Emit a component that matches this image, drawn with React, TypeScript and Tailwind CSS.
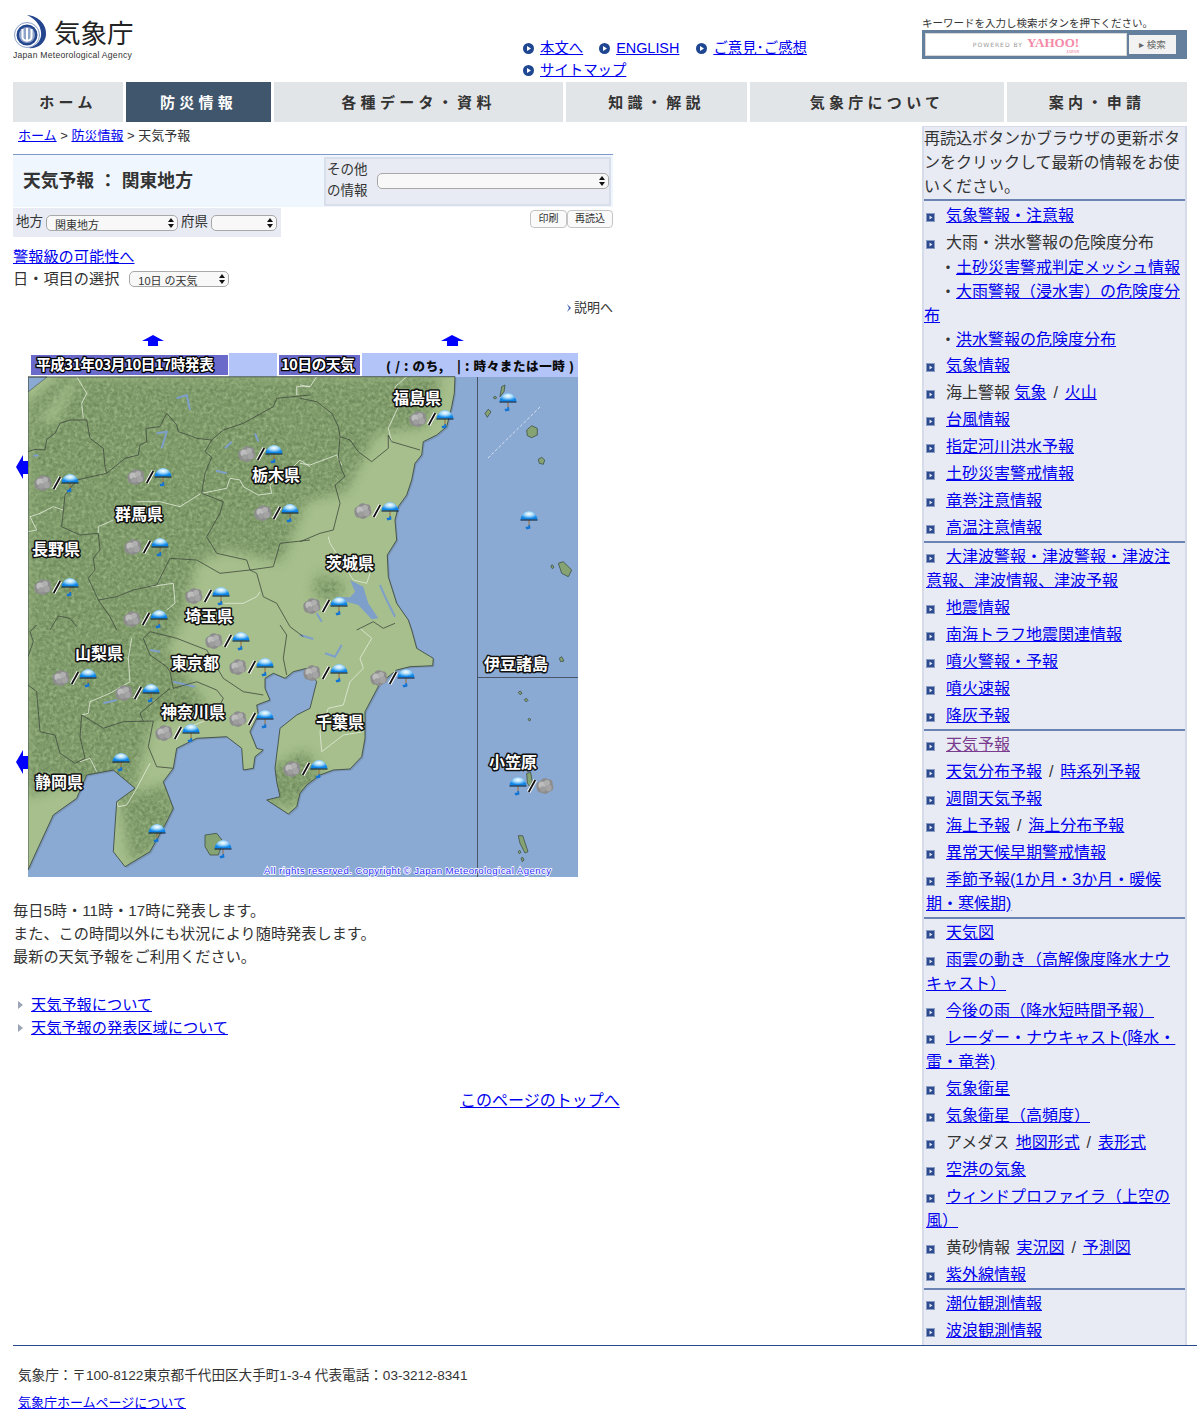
import type { ReactNode } from "react";

type Pt = number[];

// zoom-crop coordinates (3x) to page coordinates
const z = (ox: number, oy: number, pts: Pt[]) => pts.map(([x, y]) => [ox + x / 3, oy + y / 3]);
const z4 = (pts: Pt[]) => z(10, 370, pts);
const z5 = (pts: Pt[]) => z(300, 370, pts);
const z6 = (pts: Pt[]) => z(10, 625, pts);
const z7 = (pts: Pt[]) => z(300, 625, pts);
const toPts = (pts: Pt[]) => pts.map(([x, y]) => `${x.toFixed(1)},${y.toFixed(1)}`).join(" ");

const land = [
  ...z5([[465, 20], [463, 70], [455, 110], [440, 170], [410, 195], [370, 215], [365, 255], [345, 280], [335, 330], [320, 375], [295, 410], [285, 450], [290, 510], [262, 555], [265, 620], [290, 700], [325, 750], [335, 780]]),
  ...z7([[350, 70], [400, 100], [398, 122], [330, 125], [290, 135], [240, 175], [195, 260], [195, 340], [185, 395], [150, 432], [100, 435], [60, 450], [20, 480], [0, 505]]),
  ...z6([[860, 545], [835, 567], [770, 525], [810, 515], [800, 470], [795, 430], [810, 310], [860, 270], [900, 250], [920, 170], [890, 130], [850, 140], [825, 160], [790, 145], [765, 160], [765, 190], [780, 225], [740, 240], [745, 270], [720, 320], [740, 370], [760, 375], [735, 395], [730, 430], [700, 435], [695, 370], [650, 335], [560, 340], [500, 370], [490, 430], [460, 470], [490, 550], [465, 600], [420, 680], [345, 725], [310, 680], [320, 530], [375, 490], [310, 435], [230, 450], [200, 520], [130, 570], [70, 700], [54, 735]]),
  [28, 377],
];

const islands = [
  z5([[600, 80], [605, 50], [615, 45], [612, 65]]),
  z5([[555, 130], [565, 118], [573, 125], [562, 142]]),
  z5([[680, 180], [695, 167], [712, 175], [712, 195], [695, 203], [682, 197]]),
  z5([[715, 268], [725, 262], [734, 270], [730, 283], [718, 280]]),
  z5([[775, 580], [790, 575], [815, 600], [805, 620], [785, 610]]),
  z5([[752, 588], [757, 584], [762, 592], [757, 596]]),
  z5([[580, 82], [586, 79], [590, 84], [584, 87]]),
  z6([[585, 630], [620, 625], [640, 650], [625, 690], [600, 690], [585, 665]]),
  z7([[778, 100], [785, 95], [792, 108], [782, 110]]),
  z7([[655, 202], [661, 198], [666, 205], [660, 209]]),
  z7([[673, 224], [679, 220], [684, 226], [679, 231]]),
  z7([[684, 283], [688, 280], [693, 284], [688, 288]]),
  z7([[680, 445], [692, 442], [697, 470], [690, 485], [682, 475]]),
  z7([[655, 632], [668, 632], [684, 680], [675, 684], [660, 655]]),
  z7([[654, 680], [659, 676], [663, 682], [658, 686]]),
  z7([[663, 700], [668, 697], [672, 705], [667, 710]]),
];

const darkLines = [
  z4([[54, 245], [75, 238], [105, 240], [110, 208], [135, 190], [150, 160], [180, 150], [230, 150], [240, 205], [280, 235], [285, 290], [290, 310], [345, 265], [385, 255], [390, 225], [410, 215], [408, 175], [450, 170], [470, 130], [500, 165], [505, 185], [535, 195], [560, 205], [605, 210], [585, 245], [605, 262], [585, 310], [575, 370], [640, 395], [630, 430], [590, 500], [620, 550], [710, 570], [720, 600], [790, 590], [810, 520], [900, 510]]),
  z4([[290, 310], [200, 330], [165, 375], [155, 470], [210, 495], [265, 490], [270, 540], [250, 565], [255, 600], [235, 625], [265, 690], [300, 740], [320, 780]]),
  z4([[605, 210], [640, 180], [700, 160], [790, 110], [800, 85], [900, 75]]),
  z4([[720, 600], [740, 610], [760, 680], [800, 700], [840, 770], [880, 800]]),
  z4([[265, 690], [320, 680], [370, 660], [440, 645], [480, 565], [560, 570], [630, 610], [720, 600]]),
  z4([[120, 780], [145, 738], [180, 745], [200, 770]]),
  z5([[0, 85], [50, 95], [95, 130], [115, 170], [120, 200], [150, 210], [175, 245], [215, 275], [265, 235], [265, 195], [275, 215], [360, 240]]),
  z5([[120, 200], [115, 260], [125, 300], [135, 320], [105, 345], [120, 400], [100, 480], [60, 490], [0, 515]]),
  z5([[170, 780], [220, 755], [250, 775], [285, 760]]),
  z6([[54, 95], [70, 50], [60, 20], [80, 0]]),
  z6([[400, 40], [420, 20], [500, 40], [590, 75], [640, 160], [700, 200], [760, 210]]),
  z6([[400, 40], [420, 90], [470, 125], [480, 140], [490, 190], [560, 170], [620, 195], [640, 220], [620, 260]]),
  z6([[400, 290], [390, 265], [480, 190]]),
  z6([[240, 285], [280, 310], [340, 290], [430, 288], [415, 365], [440, 425], [490, 430]]),
  z6([[240, 285], [215, 270], [210, 335], [225, 400], [195, 415], [150, 385], [135, 330], [90, 320], [80, 200], [54, 180]]),
  z6([[830, 150], [820, 100], [830, 30], [810, 0]]),
];

const whiteLines = [
  z4([[200, 20], [230, 70], [215, 100], [220, 145]]),
  z4([[60, 440], [90, 430], [130, 410], [160, 420]]),
  z4([[60, 440], [80, 480], [54, 485]]),
  z4([[265, 490], [265, 470], [310, 450]]),
  z4([[380, 395], [450, 395], [510, 410], [570, 372]]),
  z4([[575, 370], [650, 355], [660, 325], [690, 330], [700, 350], [745, 375], [785, 370], [780, 345], [800, 330], [830, 310], [870, 270], [900, 290]]),
  z4([[860, 75], [860, 50], [900, 50]]),
  z4([[420, 650], [490, 640], [495, 700], [470, 720]]),
  z4([[640, 700], [700, 700], [740, 680], [750, 665]]),
  z5([[0, 280], [30, 285], [110, 255], [125, 285]]),
  z5([[50, 20], [30, 50], [0, 45]]),
  z5([[320, 20], [285, 50], [295, 110], [265, 175], [275, 215]]),
  z5([[85, 500], [90, 520], [160, 630], [200, 640], [210, 610]]),
  z6([[240, 230], [300, 205], [360, 170], [355, 100], [365, 40]]),
  z6([[240, 230], [235, 265], [215, 270]]),
  z6([[210, 410], [240, 400], [260, 440]]),
  z6([[420, 415], [380, 490], [350, 540], [325, 545], [320, 530]]),
  z6([[540, 305], [590, 285]]),
  z7([[180, 10], [215, 40], [180, 100], [190, 130], [150, 170], [130, 240], [85, 250], [60, 320], [65, 380], [130, 330], [190, 320]]),
];

const lake = z5([[150, 630], [190, 650], [205, 700], [235, 745], [215, 748], [175, 705], [130, 692], [105, 680], [150, 682], [165, 665]]);
const rivers = [
  z5([[240, 645], [255, 680], [285, 740]]),
  z5([[50, 730], [65, 755]]),
  z4([[500, 85], [530, 75], [540, 120]]),
  z4([[440, 190], [470, 185], [455, 235]]),
  z4([[618, 302], [650, 310]]),
  z4([[735, 190], [745, 215]]),
  z4([[645, 235], [665, 215]]),
  z4([[70, 258], [85, 255]]),
  z7([[75, 85], [105, 95], [125, 60]]),
  z7([[0, 30], [40, 42]]),
  z6([[420, 75], [450, 80]]),
  z6([[490, 170], [555, 185]]),
  z6([[280, 235], [320, 225]]),
];

const mountains = [
  [[28, 405], [62, 377], [440, 377], [425, 425], [375, 432], [345, 490], [305, 500], [280, 560], [225, 548], [195, 562], [180, 620], [165, 650], [205, 705], [150, 722], [130, 800], [70, 780], [28, 795]],
  [[270, 770], [305, 752], [322, 778], [290, 806], [262, 800]],
  [[122, 800], [168, 785], [176, 830], [132, 862]],
  [[318, 575], [345, 585], [335, 600], [315, 595]],
];

const pairs = [
  [43, 483], [136, 477], [247, 454], [263, 513], [133, 547], [43, 587], [194, 596], [132, 619], [418, 419], [363, 511],
  [312, 606], [214, 641], [238, 667], [61, 678], [124, 693], [164, 733], [238, 719], [312, 673], [379, 678], [292, 769],
];
const umbrellas = [[508, 402], [529, 520], [121, 762], [157, 833], [223, 849]];

const labels: [string, number, number][] = [
  ["福島県", 417, 398], ["栃木県", 276, 475], ["群馬県", 139, 514], ["長野県", 56, 549], ["茨城県", 350, 563], ["埼玉県", 209, 616],
  ["山梨県", 99, 653], ["東京都", 195, 663], ["神奈川県", 193, 712], ["千葉県", 340, 722], ["静岡県", 59, 782], ["伊豆諸島", 516, 664], ["小笠原", 513, 762],
];

function Cloud({ x, y }: { x: number; y: number }) {
  return (
    <g transform={`translate(${x} ${y})`}>
      <path d="M-8.5 1 C-9.5 -3 -6 -4.5 -4.5 -5 C-3.5 -8.5 1 -8.5 3 -6.5 C6 -7.5 8.5 -4.5 7.5 -2 C9.5 1 8 5.5 4.5 5.5 C2.5 8.5 -2 8.5 -3.5 6.5 C-6.5 7.5 -8.5 4 -8.5 1 Z" fill="#8d8d8d" />
      <circle cx="-3" cy="-1" r="3.6" fill="#bdbdbd" />
      <circle cx="2" cy="-3" r="3" fill="#b0b0b0" />
      <circle cx="3.5" cy="2" r="3.2" fill="#a4a4a4" />
      <circle cx="-2" cy="3" r="2.8" fill="#9d9d9d" />
    </g>
  );
}

function Umbrella({ x, y }: { x: number; y: number }) {
  return (
    <g transform={`translate(${x} ${y})`}>
      <line x1="0" y1="0" x2="0" y2="6" stroke="#9a6a3a" strokeWidth="1" />
      <path d="M-8.5 -0.5 C-8 -5 -4 -9 0 -9 C4 -9 8 -5 8.5 -0.5 Z" fill="url(#umb)" />
      <line x1="-8.5" y1="0" x2="8.5" y2="0" stroke="#10223a" strokeWidth="1.1" />
      <path d="M1 5 L1.5 8.5 L-2.5 9.5 L-3.5 7 L-0.5 6.5 L-0.5 5 Z" fill="#1173d4" />
    </g>
  );
}

function Slash({ x, y }: { x: number; y: number }) {
  return (
    <g>
      <line x1={x + 3.3} y1={y - 6} x2={x - 3.3} y2={y + 6} stroke="#ffffff" strokeWidth="3.8" />
      <line x1={x + 3.3} y1={y - 6} x2={x - 3.3} y2={y + 6} stroke="#111111" strokeWidth="1.8" />
    </g>
  );
}

function KantoMap() {
  return (
    <svg width="600" height="545" viewBox="13 333 600 545" className="block">
      <defs>
        <clipPath id="landClip"><polygon points={toPts(land)} /></clipPath>
        <radialGradient id="umb" cx="0.5" cy="0.35" r="0.55">
          <stop offset="0" stopColor="#ffffff" />
          <stop offset="0.45" stopColor="#a9dcfb" />
          <stop offset="1" stopColor="#0b84e8" />
        </radialGradient>
        <filter id="blurPatch"><feGaussianBlur stdDeviation="4" /></filter>
        <filter id="terrain" x="-5%" y="-5%" width="110%" height="110%" colorInterpolationFilters="sRGB">
          <feGaussianBlur in="SourceGraphic" stdDeviation="6" result="soft" />
          <feTurbulence type="fractalNoise" baseFrequency="0.28" numOctaves="3" seed="7" result="noise" />
          <feColorMatrix in="noise" type="matrix" values="0 0 0 0 0.42  0 0 0 0 0.52  0 0 0 0 0.35  2 0 0 0 -0.75" result="shade" />
          <feComposite in="shade" in2="soft" operator="in" result="shadeIn" />
          <feColorMatrix in="noise" type="matrix" values="0 0 0 0 0.62  0 0 0 0 0.72  0 0 0 0 0.53  0 2 0 0 -0.85" result="lite" />
          <feComposite in="lite" in2="soft" operator="in" result="liteIn" />
          <feMerge>
            <feMergeNode in="soft" />
            <feMergeNode in="shadeIn" />
            <feMergeNode in="liteIn" />
          </feMerge>
        </filter>
      </defs>

      {/* page arrows */}
      <polygon points="142,341 153,335 164,341 158,341 158,346 148,346 148,341" fill="#0000ff" />
      <polygon points="441,341 452,335 464,341 458,341 458,346 447,346 447,341" fill="#0000ff" />

      {/* header strip */}
      <rect x="30" y="353" width="548" height="24" fill="#b3c5f8" />
      <rect x="30" y="353" width="199" height="24" fill="#ffffff" />
      <rect x="31" y="355" width="197" height="20" fill="#6a6acb" />
      <rect x="277" y="353" width="85" height="24" fill="#ffffff" />
      <rect x="279" y="355" width="81" height="20" fill="#6a6acb" />
      <g fontFamily="'Noto Sans CJK JP', sans-serif" fontWeight="700" stroke="#000000" strokeWidth="2.6" style={{ paintOrder: "stroke" }} strokeLinejoin="round" fill="#ffffff">
        <text x="36" y="370" fontSize="15" textLength="178">平成31年03月10日17時発表</text>
        <text x="281" y="370" fontSize="15" textLength="74">10日の天気</text>
      </g>
      <text x="386" y="371" fontSize="12.5" fontWeight="900" fontFamily="'Noto Sans CJK JP', sans-serif" fill="#0a0a0a" textLength="188">( / : のち,　| : 時々または一時 )</text>

      {/* sea and land */}
      <rect x="28" y="377" width="550" height="500" fill="#8aaad4" />
      <polygon points={toPts(land)} fill="#7b97b8" transform="translate(1.5 1.5)" />
      <polygon points={toPts(land)} fill="#a6bf8c" />
      <g clipPath="url(#landClip)">
        <g filter="url(#terrain)">
          {mountains.map((m, i) => <polygon key={i} points={toPts(m)} fill="#7f9c6a" />)}
        </g>
        <polygon points="36,420 66,385 80,380 56,425" fill="#a6bf8c" opacity="0.7" filter="url(#blurPatch)" />
        <polygon points={toPts(lake)} fill="#7f9fcb" />
        {rivers.map((l, i) => <polyline key={i} points={toPts(l)} fill="none" stroke="#7f9fcb" strokeWidth="2" />)}
        {whiteLines.map((l, i) => <polyline key={i} points={toPts(l)} fill="none" stroke="#e4ecdc" strokeWidth="0.8" />)}
        {darkLines.map((l, i) => <polyline key={i} points={toPts(l)} fill="none" stroke="#454f42" strokeWidth="0.85" />)}
      </g>
      <polygon points="28,377 47,377 28,392" fill="#8aaad4" stroke="#4d5a55" strokeWidth="0.7" />
      <polygon points={toPts(land)} fill="none" stroke="#414d45" strokeWidth="0.9" />
      <rect x="13" y="377" width="15" height="500" fill="#ffffff" />
      <polygon points="16,467 23,455 23,461 28,461 28,474 23,474 23,479" fill="#0000ff" />
      <polygon points="16,762 23,750 23,756 28,756 28,769 23,769 23,774" fill="#0000ff" />
      {islands.map((p, i) => <polygon key={i} points={toPts(p)} fill="#86a373" stroke="#3f4f45" strokeWidth="0.8" />)}
      <line x1="488" y1="458" x2="541" y2="406" stroke="#e8eef8" strokeWidth="0.8" strokeDasharray="3 2" />
      <line x1="477.5" y1="377" x2="477.5" y2="877" stroke="#4a5568" strokeWidth="1" />
      <line x1="477" y1="677.5" x2="578" y2="677.5" stroke="#4a5568" strokeWidth="1" />

      {/* forecast icons */}
      {pairs.map(([x, y], i) => (
        <g key={i}>
          <Cloud x={x} y={y} />
          <Slash x={x + 14} y={y} />
          <Umbrella x={x + 27} y={y} />
        </g>
      ))}
      {umbrellas.map(([x, y], i) => <Umbrella key={i} x={x} y={y} />)}
      <Umbrella x={518} y={786} />
      <Slash x={532} y={786} />
      <Cloud x={545} y={786} />

      {/* prefecture names */}
      <g fontFamily="'Noto Sans CJK JP', sans-serif" fontWeight="700" fontSize="16" textAnchor="middle" fill="#ffffff" stroke="#111111" strokeWidth="3" strokeLinejoin="round" style={{ paintOrder: "stroke" }}>
        {labels.map(([t, x, y]) => <text key={t} x={x} y={y + 6}>{t}</text>)}
      </g>
      <text x="264" y="874" fontSize="9.6" fontFamily="'Liberation Sans', sans-serif" fill="#2a2aff" stroke="#ffffff" strokeWidth="1.6" style={{ paintOrder: "stroke" }} textLength="287">All rights reserved. Copyright © Japan Meteorological Agency</text>
    </svg>
  );
}

function A({ children, visited }: { children: ReactNode; visited?: boolean }) {
  return <a href="#" className={`underline ${visited ? "text-[#7a3b8f]" : "text-[#0000ee]"}`}>{children}</a>;
}

function TopLink({ children }: { children: ReactNode }) {
  return (
    <span className="inline-flex items-center">
      <svg width="11" height="11" viewBox="0 0 11 11" className="mr-[6px] shrink-0">
        <circle cx="5.5" cy="5.5" r="5.5" fill="#1f4690" />
        <polygon points="4,3 8,5.5 4,8" fill="#ffffff" />
      </svg>
      <A>{children}</A>
    </span>
  );
}

function Item({ children }: { children: ReactNode }) {
  return (
    <div className="mb-[3px] pl-[2px]">
      <svg width="9" height="9" viewBox="0 0 9 9" className="inline-block mr-[11px] align-[-1px]">
        <rect width="9" height="9" fill="#8a9cc4" />
        <rect x="1" y="1" width="7" height="7" fill="#2c4a8e" />
        <polygon points="3.5,2.5 6.5,4.5 3.5,6.5" fill="#dfe6f4" />
      </svg>
      {children}
    </div>
  );
}

function Sl() {
  return <span className="mx-[2.5px]"> / </span>;
}

function Sep() {
  return <div className="h-[2px] bg-[#6c84b4] mb-[2px] -mt-[2px]" />;
}

function FakeSelect({ w, label }: { w: string; label?: string }) {
  return (
    <div className={`relative h-[16px] rounded-[5px] border border-[#a8a8a8] bg-[#f8f8f8] text-[11px] leading-[18px] pl-[8px] text-[#333] overflow-hidden ${w}`}>
      {label}
      <svg width="6" height="10" viewBox="0 0 6 10" className="absolute right-[3px] top-[2px]">
        <polygon points="3,0 6,4 0,4" fill="#111" />
        <polygon points="0,6 6,6 3,10" fill="#111" />
      </svg>
    </div>
  );
}

function NavItem({ w, active, children }: { w: string; active?: boolean; children: ReactNode }) {
  return (
    <div className={`h-[40px] pt-[2px] flex items-center justify-center font-bold text-[15px] tracking-[4.3px] ${w} ${active ? "bg-[#3f566c] text-white" : "bg-[#e2e5e8] text-[#333]"}`}>
      {children}
    </div>
  );
}

export default function App() {
  return (
    <div className="w-[1200px] h-[1415px] overflow-hidden bg-white text-[#333] [font-family:'Liberation_Sans','Noto_Sans_CJK_JP',sans-serif]">
      {/* header */}
      <div className="flex h-[82px] pl-[13px] pr-[13px]">
        <div className="w-[120px] pt-[14px]">
          <div className="flex items-center h-[36px]">
            <svg width="36" height="36" viewBox="0 0 36 36" className="shrink-0">
              <path d="M14 1 C26 2 34 11 33 21 C32 30 24 35 15 34 C24 32 29 26 28 18 C27 10 22 5 14 1 Z" fill="#24468f" />
              <circle cx="14" cy="21" r="12.5" fill="none" stroke="#8fa2c8" strokeWidth="1" />
              <circle cx="14" cy="21" r="10.5" fill="#24468f" />
              <circle cx="14" cy="21" r="8" fill="#8fa2c8" />
              <path d="M9.5 15 V23 C9.5 28 18.5 28 18.5 23 V15 M14 14 V26" fill="none" stroke="#ffffff" strokeWidth="2" />
            </svg>
            <span className="ml-[5px] mt-[3px] text-[26.5px] leading-[36px] font-normal text-[#222] whitespace-nowrap">気象庁</span>
          </div>
          <div className="text-[8.6px] leading-[10px] whitespace-nowrap text-[#333] tracking-[0.25px]">Japan Meteorological Agency</div>
        </div>
        <div className="ml-[390px] w-[300px] pt-[37px] text-[14.4px] leading-[22px]">
          <div className="flex">
            <TopLink>本文へ</TopLink>
            <span className="w-[16px]" />
            <TopLink>ENGLISH</TopLink>
            <span className="w-[17px]" />
            <TopLink>ご意見･ご感想</TopLink>
          </div>
          <TopLink>サイトマップ</TopLink>
        </div>
        <div className="ml-auto w-[265px] pt-[17px]">
          <div className="text-[10.5px] leading-[13px] whitespace-nowrap">キーワードを入力し検索ボタンを押下ください。</div>
          <div className="h-[29px] bg-[#64809c] flex items-center pl-[3px]">
            <div className="w-[202px] h-[23px] bg-white border border-[#d8d8d8] flex items-center justify-center gap-[4px]">
              <span className="text-[6px] tracking-[1px] text-[#999] [font-family:'DejaVu_Sans',sans-serif]">POWERED BY</span>
              <span className="relative text-[13px] font-bold leading-[13px] text-[#f58aa8] [font-family:'Liberation_Serif',serif] -mt-[5px]">
                YAHOO!
                <span className="absolute right-0 top-[13px] text-[4px] leading-[5px]">JAPAN</span>
              </span>
            </div>
            <div className="ml-[2px] w-[47px] h-[19px] bg-[#f2f2f2] text-[9.5px] leading-[19px] text-center text-[#666]">▸ 検索</div>
          </div>
        </div>
      </div>

      {/* global nav */}
      <div className="flex gap-[3px] pl-[13px]">
        <NavItem w="w-[110px]">ホーム</NavItem>
        <NavItem w="w-[145px]" active>防災情報</NavItem>
        <NavItem w="w-[289px]">各種データ・資料</NavItem>
        <NavItem w="w-[181px]">知識・解説</NavItem>
        <NavItem w="w-[254px]">気象庁について</NavItem>
        <NavItem w="w-[180px]">案内・申請</NavItem>
      </div>

      {/* body */}
      <div className="flex pl-[13px] pt-[4px]">
        <div className="w-[909px] shrink-0">
          <div className="pl-[5px] h-[28px] text-[13px] leading-[20px]"><A>ホーム</A> &gt; <A>防災情報</A> &gt; 天気予報</div>
          <div className="w-[600px] h-[53px] bg-[#eff6fe] border-t border-[#7f9acb] flex items-center justify-between pr-[2px]">
            <h1 className="pl-[10px] mt-[1px] text-[17.8px] font-bold text-[#333]">天気予報 ： 関東地方</h1>
            <div className="w-[287px] h-[49px] bg-[#e8ebf3] border-2 border-[#d8deea] flex items-center pl-[1px] text-[13.5px] leading-[21px]">
              <div className="w-[50px] -mt-[2px]">その他<br />の情報</div>
              <FakeSelect w="w-[232px]" />
            </div>
          </div>
          <div className="w-[600px] flex justify-between items-start mt-[1px]">
            <div className="w-[268px] h-[29px] bg-[#e8ebf3] flex items-center pl-[3px] text-[13.5px]">
              <span className="mr-[3px]">地方</span>
              <FakeSelect w="w-[132px]" label="関東地方" />
              <span className="mx-[3px]">府県</span>
              <FakeSelect w="w-[66px]" />
            </div>
            <div className="flex mt-[2px] text-[10px] leading-[16px] text-center">
              <div className="w-[37px] h-[18px] rounded-[4px] border border-[#c4c4c4] bg-[#fafafa]">印刷</div>
              <div className="w-[46px] h-[18px] rounded-[4px] border border-[#c4c4c4] bg-[#fafafa]">再読込</div>
            </div>
          </div>
          <div className="mt-[8px] text-[15.2px] leading-[23px]"><A>警報級の可能性へ</A></div>
          <div className="flex items-center text-[15.2px] leading-[23px] -mt-[1px]">
            <span className="mr-[10px]">日・項目の選択</span>
            <FakeSelect w="w-[100px]" label="10日 の天気" />
          </div>
          <div className="w-[600px] mt-[8px] h-[20px] flex justify-end items-center text-[13px]">
            <svg width="6" height="8" viewBox="0 0 6 8" className="mr-[2px]"><polygon points="1,0 5,4 1,8 3,4" fill="#3a5aa8" /></svg>
            説明へ
          </div>
          <div className="mt-[15px]"><KantoMap /></div>
          <div className="mt-[21px] text-[15.2px] leading-[23px]">
            <div>毎日5時・11時・17時に発表します。</div>
            <div>また、この時間以外にも状況により随時発表します。</div>
            <div>最新の天気予報をご利用ください。</div>
          </div>
          <div className="mt-[25px] text-[15.2px] leading-[23px]">
            {["天気予報について", "天気予報の発表区域について"].map((t) => (
              <div key={t} className="flex items-center">
                <svg width="18" height="10" viewBox="0 0 18 10"><polygon points="5,1 10,5 5,9" fill="#9aa5b5" /></svg>
                <A>{t}</A>
              </div>
            ))}
          </div>
          <div className="mt-[50px] ml-[447px] text-[16px] leading-[24px]"><A>このページのトップへ</A></div>
        </div>

        <aside className="w-[265px] h-[1219px] shrink-0 bg-[#e8ebf3] border-x-2 border-t border-[#d5dbe8] text-[16px] leading-[24px] overflow-hidden">
          <div className="pb-[2px]">再読込ボタンかブラウザの更新ボタンをクリックして最新の情報をお使いください。</div>
          <Sep />
          <div className="h-[1px]" />
          <Item><A>気象警報・注意報</A></Item>
          <Item>大雨・洪水警報の危険度分布</Item>
          <div className="mb-[2px] -mt-[2px]">
            <div>　・<A>土砂災害警戒判定メッシュ情報</A></div>
            <div>　・<A>大雨警報（浸水害）の危険度分布</A></div>
            <div>　・<A>洪水警報の危険度分布</A></div>
          </div>
          <Item><A>気象情報</A></Item>
          <Item>海上警報 <A>気象</A><Sl /><A>火山</A></Item>
          <Item><A>台風情報</A></Item>
          <Item><A>指定河川洪水予報</A></Item>
          <Item><A>土砂災害警戒情報</A></Item>
          <Item><A>竜巻注意情報</A></Item>
          <Item><A>高温注意情報</A></Item>
          <Sep />
          <Item><A>大津波警報・津波警報・津波注意報、津波情報、津波予報</A></Item>
          <Item><A>地震情報</A></Item>
          <Item><A>南海トラフ地震関連情報</A></Item>
          <Item><A>噴火警報・予報</A></Item>
          <Item><A>噴火速報</A></Item>
          <Item><A>降灰予報</A></Item>
          <Sep />
          <Item><A visited>天気予報</A></Item>
          <Item><A>天気分布予報</A><Sl /><A>時系列予報</A></Item>
          <Item><A>週間天気予報</A></Item>
          <Item><A>海上予報</A><Sl /><A>海上分布予報</A></Item>
          <Item><A>異常天候早期警戒情報</A></Item>
          <Item><A>季節予報(1か月・3か月・暖候期・寒候期)</A></Item>
          <Sep />
          <Item><A>天気図</A></Item>
          <Item><A>雨雲の動き（高解像度降水ナウキャスト）</A></Item>
          <Item><A>今後の雨（降水短時間予報）</A></Item>
          <Item><A>レーダー・ナウキャスト(降水・雷・竜巻)</A></Item>
          <Item><A>気象衛星</A></Item>
          <Item><A>気象衛星（高頻度）</A></Item>
          <Item>アメダス <span className="ml-[2px]"><A>地図形式</A></span><Sl /><A>表形式</A></Item>
          <Item><A>空港の気象</A></Item>
          <Item><A>ウィンドプロファイラ（上空の風）</A></Item>
          <Item>黄砂情報 <span className="ml-[2px]"><A>実況図</A></span><Sl /><A>予測図</A></Item>
          <Item><A>紫外線情報</A></Item>
          <Sep />
          <Item><A>潮位観測情報</A></Item>
          <Item><A>波浪観測情報</A></Item>
        </aside>
      </div>

      {/* footer */}
      <div className="ml-[13px] w-[1184px] border-t border-[#2a4a8a] pl-[5px] pt-[20px] text-[13.6px]">
        <div className="leading-[20px]">気象庁：〒100-8122東京都千代田区大手町1-3-4 代表電話：03-3212-8341</div>
        <div className="mt-[7px] text-[13px] leading-[20px]"><A>気象庁ホームページについて</A></div>
      </div>
    </div>
  );
}
